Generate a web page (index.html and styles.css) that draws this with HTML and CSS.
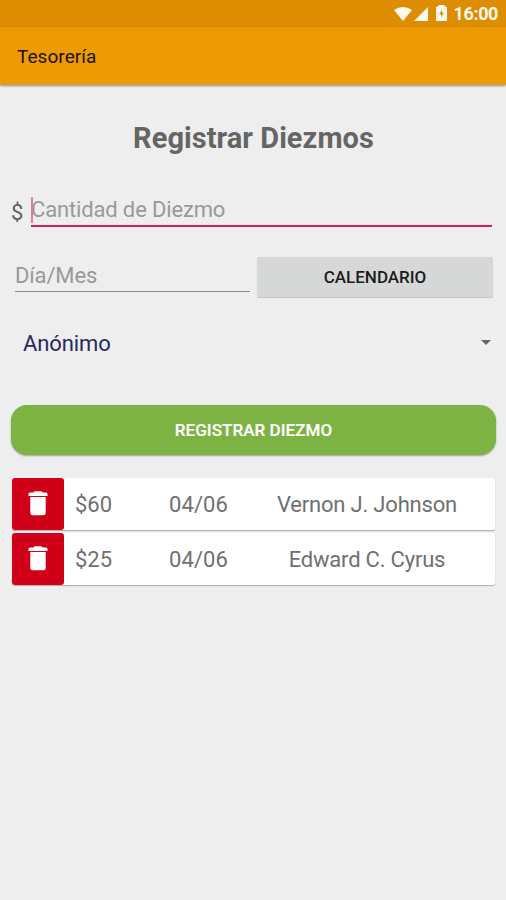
FILE: index.html
```html
<!DOCTYPE html>
<html lang="es">
<head>
<meta charset="utf-8">
<title>Tesorería</title>
<link rel="stylesheet" href="styles.css">
</head>
<body>
<div class="status">
  <svg class="wifi" width="18" height="14" viewBox="0 0 18 14"><path d="M0 3Q9-3 18 3L9 14Z"/></svg>
  <svg class="signal" width="14" height="14" viewBox="0 0 14 14"><path d="M14 0V14H0Z"/></svg>
  <svg class="battery" width="11" height="16" viewBox="0 0 11 16"><path fill-rule="evenodd" d="M2.5 0H8.5V1.5H10Q11 1.5 11 2.5V15Q11 16 10 16H1Q0 16 0 15V2.5Q0 1.5 1 1.5H2.5ZM6.1 4.5L3.2 9.2H5V12.4L7.9 7.8H6.1Z"/></svg>
  <span class="clock">16:00</span>
</div>
<header class="appbar"><span>Tesorería</span></header>
<main>
  <h1><span>Registrar Diezmos</span></h1>
  <div class="amount">
    <span class="currency">$</span>
    <div class="field focused"><span>Cantidad de Diezmo</span></div>
  </div>
  <div class="date">
    <div class="field"><span>Día/Mes</span></div>
    <button class="calendar"><span>CALENDARIO</span></button>
  </div>
  <div class="spinner">
    <span>Anónimo</span>
    <svg width="10" height="5" viewBox="0 0 10 5"><path d="M0 0H10L5 5Z"/></svg>
  </div>
  <button class="submit"><span>REGISTRAR DIEZMO</span></button>
  <div class="list">
    <div class="row">
      <div class="delete"><svg width="20" height="25" viewBox="0 0 20 25"><path d="M5.5 1.4Q6 .2 7.2 .2H12.8Q14 .2 14.5 1.4H18Q19.5 1.6 19.5 3V5H.5V3Q.5 1.6 2 1.4ZM2.3 6H17.7V22Q17.7 24.2 15.5 24.2H4.5Q2.3 24.2 2.3 22Z"/></svg></div>
      <span class="sum">$60</span><span class="day">04/06</span><span class="name">Vernon J. Johnson</span>
    </div>
    <div class="row">
      <div class="delete"><svg width="20" height="25" viewBox="0 0 20 25"><path d="M5.5 1.4Q6 .2 7.2 .2H12.8Q14 .2 14.5 1.4H18Q19.5 1.6 19.5 3V5H.5V3Q.5 1.6 2 1.4ZM2.3 6H17.7V22Q17.7 24.2 15.5 24.2H4.5Q2.3 24.2 2.3 22Z"/></svg></div>
      <span class="sum">$25</span><span class="day">04/06</span><span class="name">Edward C. Cyrus</span>
    </div>
  </div>
</main>
</body>
</html>
```
FILE: styles.css
```css
* { box-sizing: border-box; }
body { margin: 0; height: 900px; background: #eee; font-family: Roboto, sans-serif; color: #6b6b6b; overflow: hidden; }
button { border: 0; padding: 0; font-family: inherit; display: block; }
svg { display: block; flex: none; }
span { white-space: nowrap; }
.status { height: 27px; background: #dc8d02; display: flex; align-items: flex-start; justify-content: flex-end; padding-right: 8px; color: #fff8ec; }
.status svg { fill: #fff8ec; }
.wifi { margin-top: 7px; }
.signal { margin: 7px 8px 0 2px; }
.battery { margin: 5px 7px 0 0; }
.clock { font-size: 18px; font-weight: 700; line-height: 28px; letter-spacing: -.4px; }
.appbar { height: 58px; background: #ee9a05; padding-left: 17px; display: flex; align-items: center; color: #1a1206; font-size: 19px; line-height: 24px; letter-spacing: .05px; box-shadow: 0 1px 2px rgba(70, 80, 110, .6); padding-top: 2px; }
main { padding: 34px 10px 0 11px; }
h1 { margin: 0; text-align: center; font-size: 29px; line-height: 38px; font-weight: 700; color: #656565; letter-spacing: .05px; }
.amount { display: flex; margin-top: 35px; height: 35px; padding-right: 4px; }
.currency { width: 20px; font-size: 22px; line-height: 41px; color: #606060; }
.field { flex: 1; font-size: 22px; line-height: 36px; color: #999; border-bottom: 1px solid #8c8c8c; letter-spacing: -.15px; }
.focused { border-bottom: 2px solid #d0205c; height: 35px; position: relative; }
.focused::before { content: ""; position: absolute; left: 0; top: 5px; width: 2px; height: 26px; background: #e27b9e; }
.date { display: flex; gap: 7px; margin-top: 30px; padding: 0 3px 0 4px; height: 41px; }
.date .field { height: 35px; flex: 0 0 235px; line-height: 37px; }
.calendar { flex: 1; height: 40px; border-radius: 2px; background: #d6d8d7; color: #1b1b1b; font-size: 17px; font-weight: 500; box-shadow: 0 1px 1px rgba(0, 0, 0, .18); }
.spinner { height: 40px; margin-top: 25px; padding: 0 5px 0 12px; display: flex; align-items: center; justify-content: space-between; font-size: 22px; letter-spacing: -.1px; color: #252b5e; }
.spinner svg { fill: #666; margin-top: -1px; }
.submit { width: 485px; height: 50px; margin-top: 42px; border-radius: 16px; background: #7cb342; color: #fff; font-size: 17px; font-weight: 500; letter-spacing: .05px; box-shadow: 0 1px 2px rgba(0, 0, 0, .35); }
.submit span { -webkit-text-stroke: .2px #fff; }
.list { margin: 23px 0 0 1px; display: flex; flex-direction: column; gap: 2.6px; }
.row { width: 483px; height: 52px; display: grid; grid-template-columns: 52px 85px 106px 224px; grid-template-rows: 52px; align-items: center; background: #fff; border-radius: 2px; box-shadow: 0 1px 1px rgba(0, 0, 0, .28); font-size: 22px; line-height: 50px; color: #707070; }
.row span { padding-top: 2px; }
.delete { height: 52px; border-radius: 3px; background: #d00018; display: grid; place-items: center; padding-bottom: 1px; }
.delete svg { fill: #fff; }
.row .sum { padding-left: 11px; }
.row .day { padding-left: 20px; letter-spacing: .1px; }
.name { text-align: center; letter-spacing: -.2px; }
```
